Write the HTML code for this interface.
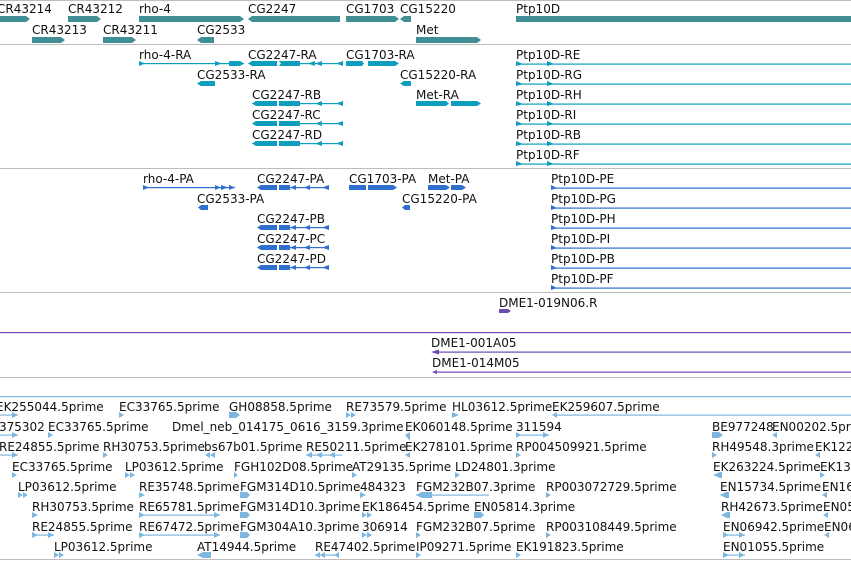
<!DOCTYPE html>
<html><head><meta charset="utf-8"><style>
html,body{margin:0;padding:0;background:#fff;width:851px;height:561px;overflow:hidden}
svg text{font-family:"DejaVu Sans","Liberation Sans",sans-serif;font-size:12px;fill:#111}
</style></head><body>
<svg width="851" height="561" xmlns="http://www.w3.org/2000/svg">
<!-- separators -->
<g fill="#bdbdbd">
<rect x="0" y="0" width="851" height="1"/>
<rect x="0" y="44" width="851" height="1"/>
<rect x="0" y="168" width="851" height="1"/>
<rect x="0" y="292" width="851" height="1"/>
<rect x="0" y="377" width="851" height="1"/>
<rect x="0" y="559" width="851" height="1"/>
</g>

<!-- Track 1: genes -->
<g>
<text x="-3" y="13">CR43214</text><text x="68" y="13">CR43212</text><text x="139" y="13">rho-4</text>
<text x="248" y="13">CG2247</text><text x="346" y="13">CG1703</text><text x="400" y="13">CG15220</text><text x="516" y="13">Ptp10D</text>
<text x="32" y="34">CR43213</text><text x="103" y="34">CR43211</text><text x="197" y="34">CG2533</text><text x="416" y="34">Met</text>
</g>
<g fill="#418f94">
<polygon points="0,16 26,16 30,19 26,22 0,22"/>
<polygon points="68,16 97,16 101,19 97,22 68,22"/>
<polygon points="139,16 240,16 244,19 240,22 139,22"/>
<polygon points="252,16 340,16 340,22 252,22 248,19"/>
<polygon points="346,16 395,16 399,19 395,22 346,22"/>
<polygon points="404,16 411,16 411,22 404,22 400,19"/>
<rect x="516" y="16" width="335" height="6"/>
<polygon points="32,37 61,37 65,40 61,43 32,43"/>
<polygon points="103,37 132,37 136,40 132,43 103,43"/>
<polygon points="201,37 214,37 214,43 201,43 197,40"/>
<polygon points="416,37 477,37 481,40 477,43 416,43"/>
</g>

<!-- Track 2: transcripts -->
<g>
<text x="139" y="59">rho-4-RA</text><text x="248" y="59">CG2247-RA</text><text x="346" y="59">CG1703-RA</text><text x="516" y="59">Ptp10D-RE</text>
<text x="197" y="79">CG2533-RA</text><text x="400" y="79">CG15220-RA</text><text x="516" y="79">Ptp10D-RG</text>
<text x="252" y="99">CG2247-RB</text><text x="416" y="99">Met-RA</text><text x="516" y="99">Ptp10D-RH</text>
<text x="252" y="119">CG2247-RC</text><text x="516" y="119">Ptp10D-RI</text>
<text x="252" y="139">CG2247-RD</text><text x="516" y="139">Ptp10D-RB</text>
<text x="516" y="159">Ptp10D-RF</text>
</g>
<g fill="#0d9dbd">
<rect x="139" y="63" width="105" height="1.2"/>
<polygon points="139,61 145,63.5 139,66"/><polygon points="215,61 222,63.5 215,66"/><polygon points="229,61 240,61 244,63.5 240,66 229,66"/>
<polygon points="252,61 277,61 277,66 252,66 248,63.5"/><polygon points="279,61 300,61 300,66 279,66 281,63.5"/>
<rect x="300" y="63" width="43" height="1.2"/><polygon points="315,61 308,63.5 315,66"/><polygon points="322,61 315,63.5 322,66"/><polygon points="343,61 336,63.5 343,66"/>
<polygon points="346,61 362,61 364,63.5 362,66 346,66"/><polygon points="368,61 395,61 399,63.5 395,66 368,66"/>
<polygon points="201,81 215,81 215,86 201,86 197,83.5"/>
<polygon points="404,81 411,81 411,86 404,86 400,83.5"/>
<polygon points="416,101 446,101 449,103.5 446,106 416,106"/><polygon points="451,101 477,101 481,103.5 477,106 451,106"/>
<!-- CG2247 RB RC RD -->
<polygon points="256,101 277,101 277,106 256,106 252,103.5"/><polygon points="279,101 300,101 300,106 279,106"/><rect x="300" y="103" width="43" height="1.2"/><polygon points="322,101 315,103.5 322,106"/><polygon points="343,101 336,103.5 343,106"/>
<polygon points="256,121 277,121 277,126 256,126 252,123.5"/><polygon points="279,121 300,121 300,126 279,126"/><rect x="300" y="123" width="43" height="1.2"/><polygon points="322,121 315,123.5 322,126"/><polygon points="343,121 336,123.5 343,126"/>
<polygon points="256,141 277,141 277,146 256,146 252,143.5"/><polygon points="279,141 300,141 300,146 279,146"/><rect x="300" y="143" width="43" height="1.2"/><polygon points="322,141 315,143.5 322,146"/><polygon points="343,141 336,143.5 343,146"/>
<!-- Ptp10D R -->
<g id="pr"><rect x="516" y="63.5" width="335" height="1.2"/><polygon points="516,61 523,64 516,66"/><polygon points="547,61 554,64 547,66"/></g>
<use href="#pr" y="20"/><use href="#pr" y="40"/><use href="#pr" y="60"/><use href="#pr" y="80"/><use href="#pr" y="100"/>
</g>

<!-- Track 3: proteins -->
<g>
<text x="143" y="183">rho-4-PA</text><text x="257" y="183">CG2247-PA</text><text x="349" y="183">CG1703-PA</text><text x="428" y="183">Met-PA</text><text x="551" y="183">Ptp10D-PE</text>
<text x="197" y="203">CG2533-PA</text><text x="402" y="203">CG15220-PA</text><text x="551" y="203">Ptp10D-PG</text>
<text x="257" y="223">CG2247-PB</text><text x="551" y="223">Ptp10D-PH</text>
<text x="257" y="243">CG2247-PC</text><text x="551" y="243">Ptp10D-PI</text>
<text x="257" y="263">CG2247-PD</text><text x="551" y="263">Ptp10D-PB</text>
<text x="551" y="283">Ptp10D-PF</text>
</g>
<g fill="#2e6fcf">
<rect x="143" y="187" width="92" height="1.2"/><polygon points="143,185 149,187.5 143,190"/><polygon points="215,185 221,187.5 215,190"/><polygon points="221,185 228,187.5 221,190"/><polygon points="229,185 235,187.5 229,190"/>
<g id="cg"><polygon points="261,185 277,185 277,190 261,190 257,187.5"/><polygon points="279,185 290,185 290,190 279,190"/><rect x="290" y="187" width="39" height="1.2"/><polygon points="296,185 290,187.5 296,190"/><polygon points="310,185 304,187.5 310,190"/><polygon points="329,185 322,187.5 329,190"/></g>
<use href="#cg" y="40"/><use href="#cg" y="60"/><use href="#cg" y="80"/>
<polygon points="349,185 366,185 366,190 349,190"/><polygon points="368,185 393,185 397,187.5 393,190 368,190"/>
<polygon points="428,185 446,185 450,187.5 446,190 428,190"/><polygon points="451,185 462,185 466,187.5 462,190 451,190"/>
<polygon points="201,205 208,205 208,210 201,210 198,207.5"/>
<polygon points="405,205 410,205 410,210 405,210 402,207.5"/>
<g id="pp"><rect x="551" y="187.5" width="300" height="1.2"/><polygon points="551,185 557,188 551,190"/></g>
<use href="#pp" y="20"/><use href="#pp" y="40"/><use href="#pp" y="60"/><use href="#pp" y="80"/><use href="#pp" y="100"/>
</g>

<!-- Track 4: BACs -->
<g>
<text x="499" y="307">DME1-019N06.R</text>
<text x="431" y="367" style="display:none"></text>
<text x="431" y="347">DME1-001A05</text>
<text x="432" y="367">DME1-014M05</text>
</g>
<g fill="#6d4bb0">
<polygon points="499,309 508,309 511,311 508,313 499,313"/>
<rect x="0" y="332" width="851" height="1.2"/>
<rect x="433" y="351.5" width="418" height="1.2"/><polygon points="431,352 439,349.5 439,354.5"/>
<rect x="433" y="371.5" width="418" height="1.2"/><polygon points="432,372 437,370 437,374"/>
</g>

<!-- Track 5: ESTs -->
<g fill="#7db7e0">
<rect x="0" y="396" width="851" height="1.2"/>
</g>
<g>
<text x="-4" y="411">EK255044.5prime</text><text x="119" y="411">EC33765.5prime</text><text x="229" y="411">GH08858.5prime</text><text x="346" y="411">RE73579.5prime</text><text x="452" y="411">HL03612.5prime</text><text x="552" y="411">EK259607.5prime</text>
<text x="-1" y="431">375302</text><text x="48" y="431">EC33765.5prime</text><text x="172" y="431">Dmel_neb_014175_0616_3159.3prime</text><text x="405" y="431">EK060148.5prime</text><text x="516" y="431">311594</text><text x="712" y="431">BE977248</text><text x="772" y="431">EN00202.5prime</text>
<text x="-1" y="451">RE24855.5prime</text><text x="103" y="451">RH30753.5prime</text><text x="204" y="451">bs67b01.5prime</text><text x="306" y="451">RE50211.5prime</text><text x="405" y="451">EK278101.5prime</text><text x="516" y="451">RP004509921.5prime</text><text x="712" y="451">RH49548.3prime</text><text x="815" y="451">EK122</text>
<text x="12" y="471">EC33765.5prime</text><text x="125" y="471">LP03612.5prime</text><text x="234" y="471">FGH102D08.5prime</text><text x="352" y="471">AT29135.5prime</text><text x="455" y="471">LD24801.3prime</text><text x="713" y="471">EK263224.5prime</text><text x="820" y="471">EK13</text>
<text x="18" y="491">LP03612.5prime</text><text x="139" y="491">RE35748.5prime</text><text x="240" y="491">FGM314D10.5prime</text><text x="360" y="491">484323</text><text x="416" y="491">FGM232B07.3prime</text><text x="546" y="491">RP003072729.5prime</text><text x="720" y="491">EN15734.5prime</text><text x="822" y="491">EN16</text>
<text x="32" y="511">RH30753.5prime</text><text x="139" y="511">RE65781.5prime</text><text x="240" y="511">FGM314D10.3prime</text><text x="362" y="511">EK186454.5prime</text><text x="474" y="511">EN05814.3prime</text><text x="721" y="511">RH42673.5prime</text><text x="823" y="511">EN05</text>
<text x="32" y="531">RE24855.5prime</text><text x="139" y="531">RE67472.5prime</text><text x="240" y="531">FGM304A10.3prime</text><text x="362" y="531">306914</text><text x="416" y="531">FGM232B07.5prime</text><text x="546" y="531">RP003108449.5prime</text><text x="723" y="531">EN06942.5prime</text><text x="824" y="531">EN06</text>
<text x="54" y="551">LP03612.5prime</text><text x="197" y="551">AT14944.5prime</text><text x="315" y="551">RE47402.5prime</text><text x="416" y="551">IP09271.5prime</text><text x="516" y="551">EK191823.5prime</text><text x="723" y="551">EN01055.5prime</text>
</g>
<g fill="#7db7e0">
<!-- row1 y 415 -->
<rect x="0" y="414.5" width="18" height="1.2"/><polygon points="12,412 18,415 12,418"/>
<polygon points="119,412 124,415 119,418"/>
<polygon points="229,412 236,412 240,415 236,418 229,418"/>
<polygon points="346,412 351,415 346,418"/><polygon points="351,412 356,415 351,418"/>
<polygon points="452,412 459,415 452,418"/>
<rect x="555" y="414.5" width="296" height="1.2"/><polygon points="552,415 557,412 557,418"/>
<!-- row2 y 435 -->
<rect x="0" y="434.5" width="18" height="1.2"/><polygon points="12,432 18,435 12,438"/>
<polygon points="48,432 53,435 48,438"/>
<polygon points="405,432 410,429 410,438" transform="translate(0,3)"/>
<rect x="516" y="434.5" width="33" height="1.2"/><polygon points="516,432 521,435 516,438"/><polygon points="543,432 549,435 543,438"/>
<polygon points="712,432 719,432 723,435 719,438 712,438"/>
<polygon points="772,435 777,432 777,438"/>
<!-- row3 y 455 -->
<rect x="0" y="454.5" width="18" height="1.2"/><polygon points="12,452 18,455 12,458"/>
<polygon points="103,452 108,455 103,458"/>
<polygon points="205,455 210,452 210,458"/><polygon points="210,455 215,452 215,458"/>
<rect x="306" y="454.5" width="36" height="1.2"/><polygon points="306,455 312,452 312,458"/><polygon points="316,455 322,452 322,458"/><polygon points="329,455 335,452 335,458"/>
<polygon points="405,455 410,452 410,458"/>
<polygon points="516,452 521,455 516,458"/>
<polygon points="712,452 717,455 712,458"/>
<polygon points="815,455 820,452 820,458"/>
<!-- row4 y 475 -->
<polygon points="12,472 17,475 12,478"/>
<polygon points="125,472 130,475 125,478"/><polygon points="130,472 135,475 130,478"/>
<polygon points="234,472 238,475 234,478"/>
<polygon points="352,472 357,475 352,478"/>
<polygon points="455,472 460,475 455,478"/>
<polygon points="713,475 720,472 722,472 722,478 720,478"/>
<polygon points="820,472 825,475 820,478"/>
<!-- row5 y 495 -->
<polygon points="18,492 23,495 18,498"/><polygon points="23,492 28,495 23,498"/>
<polygon points="139,492 145,495 139,498"/>
<polygon points="240,492 247,492 250,495 247,498 240,498"/>
<polygon points="360,492 366,495 360,498"/>
<rect x="416" y="494.5" width="73" height="1.2"/><polygon points="416,495 422,492 432,492 432,498 422,498"/>
<polygon points="546,492 551,495 546,498"/>
<polygon points="720,495 726,492 729,492 729,498 726,498"/>
<polygon points="822,495 827,492 827,498"/>
<!-- row6 y 515 -->
<polygon points="32,512 38,515 32,518"/>
<rect x="139" y="514.5" width="81" height="1.2"/><polygon points="139,512 145,515 139,518"/><polygon points="214,512 220,515 214,518"/>
<polygon points="240,512 247,512 250,515 247,518 240,518"/>
<polygon points="362,512 367,515 362,518"/><polygon points="367,512 372,515 367,518"/>
<polygon points="474,512 481,512 484,515 481,518 474,518"/>
<polygon points="721,515 727,512 730,512 730,518 727,518"/>
<polygon points="823,515 828,512 828,518"/>
<!-- row7 y 535 -->
<rect x="32" y="534.5" width="22" height="1.2"/><polygon points="32,532 38,535 32,538"/><polygon points="48,532 54,535 48,538"/>
<rect x="139" y="534.5" width="81" height="1.2"/><polygon points="139,532 145,535 139,538"/><polygon points="214,532 220,535 214,538"/>
<polygon points="240,532 247,532 250,535 247,538 240,538"/>
<polygon points="362,532 367,535 362,538"/><polygon points="367,532 372,535 367,538"/>
<polygon points="416,532 421,535 416,538"/>
<polygon points="546,532 551,535 546,538"/>
<rect x="723" y="534.5" width="22" height="1.2"/><polygon points="723,532 729,535 723,538"/><polygon points="739,532 745,535 739,538"/>
<polygon points="824,535 829,532 829,538"/>
<!-- row8 y 555 -->
<polygon points="54,552 59,555 54,558"/><polygon points="59,552 64,555 59,558"/>
<polygon points="197,555 203,552 211,552 211,558 203,558"/>
<rect x="315" y="554.5" width="24" height="1.2"/><polygon points="315,555 320,552 320,558"/><polygon points="320,555 325,552 325,558"/><polygon points="334,555 339,552 339,558"/>
<polygon points="416,552 421,555 416,558"/>
<polygon points="516,552 521,555 516,558"/>
<rect x="723" y="554.5" width="22" height="1.2"/><polygon points="723,552 729,555 723,558"/><polygon points="739,552 745,555 739,558"/>
</g>
</svg>
</body></html>
